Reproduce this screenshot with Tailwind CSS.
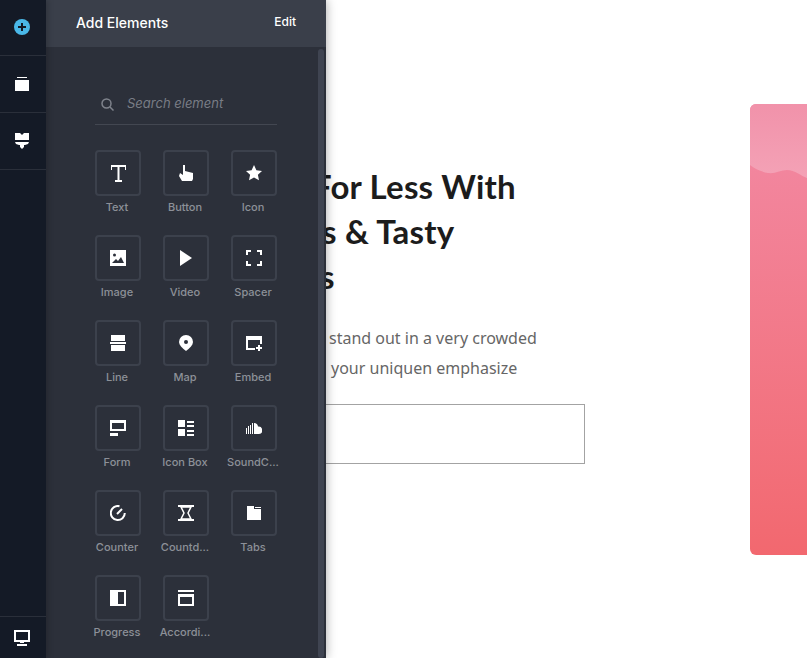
<!DOCTYPE html>
<html lang="en">
<head>
  <meta charset="UTF-8" />
  <title>Add Elements</title>
  <script src="https://cdn.jsdelivr.net/npm/@tailwindcss/browser@4"></script>
</head>
<body class="bg-white overflow-hidden">
  <div class="flex h-[658px] w-[807px] overflow-hidden font-['Inter',sans-serif]">

    <!-- icon rail -->
    <nav class="relative z-20 flex w-[46px] shrink-0 flex-col bg-[#141a26] text-white shadow-[2px_0_6px_rgba(0,0,0,0.2)]">
      <div class="flex h-[56px] items-center justify-center border-b border-[#2a2f3a] pb-[1px] pr-[2px]">
        <svg width="16" height="16" viewBox="0 0 16 16"><circle cx="8" cy="8" r="8" fill="#4ab8e8"/><path d="M8 4v8M4 8h8" stroke="#141a26" stroke-width="2"/></svg>
      </div>
      <div class="flex h-[57px] items-center justify-center border-b border-[#2a2f3a] pr-[2px]">
        <svg width="14" height="15" viewBox="0 0 14 15" fill="#fff"><rect x="2" y="0" width="10" height="1"/><rect x="0" y="3" width="14" height="11"/></svg>
      </div>
      <div class="flex h-[57px] items-center justify-center border-b border-[#2a2f3a] pr-[2px]">
        <svg width="14" height="16" viewBox="0 0 14 16" fill="#fff"><path d="M0 0h5l2 2 2-2h5v7H0zM0 9h14l-1 2-3 1-1 0v2l-2 2-2-2v-2l-1 0-3-1z"/></svg>
      </div>
      <div class="mt-auto flex h-[42px] items-center justify-center border-t border-[#2a2f3a] pr-[2px]">
        <svg width="16" height="16" viewBox="0 0 16 16" fill="none"><rect x="1" y="1" width="14" height="10" stroke="#fff" stroke-width="2"/><path d="M6 12h4v1H6zM3 14h10v2H3z" fill="#fff"/></svg>
      </div>
    </nav>

    <!-- add elements panel -->
    <aside class="relative z-10 flex w-[280px] shrink-0 flex-col bg-[#2c303a] shadow-[0_0_10px_rgba(0,0,0,0.35)]">
      <header class="flex h-[47px] shrink-0 items-center justify-between bg-[#3a3f4a] pb-[3px] pl-[30px] pr-[30px]">
        <h2 class="text-[14px] font-medium text-white">Add Elements</h2>
        <button class="text-[12px] font-medium text-white">Edit</button>
      </header>
      <div class="absolute bottom-0 right-[2px] top-[49px] w-[6px] rounded-[3px] bg-[#3f4451]"></div>

      <div class="px-[49px] pt-[44px]">
        <div class="flex h-[34px] items-start gap-[13px] border-b border-[#434751] pl-[6px] pt-[4px]">
          <svg class="mt-[3px]" width="13" height="13" viewBox="0 0 13 13" fill="none" stroke="#7f838c" stroke-width="1.5"><circle cx="5.5" cy="5.5" r="4.5"/><path d="M9 9l3.5 3.500"/></svg>
          <span class="text-[13px] italic leading-[17px] text-[#797d86]">Search element</span>
        </div>

        <div class="mt-[25px] grid grid-cols-[46px_46px_46px] gap-x-[22px] gap-y-[21px]">
          <!-- Text -->
          <div class="flex w-[46px] flex-col items-center">
            <div class="flex h-[46px] w-[46px] items-center justify-center rounded-[4px] border-2 border-[#3c414c]">
              <svg width="15" height="17" viewBox="0 0 15 17" fill="#fff"><path d="M0 0h15v5h-1V2H8.500v13H11v2H4v-2h2.500V2H1v3H0z"/></svg>
            </div>
            <span class="mt-[4px] whitespace-nowrap pr-[2px] text-[11px] font-medium leading-[14px] text-[#8d9098]">Text</span>
          </div>
          <!-- Button -->
          <div class="flex w-[46px] flex-col items-center">
            <div class="flex h-[46px] w-[46px] items-center justify-center rounded-[4px] border-2 border-[#3c414c]">
              <svg width="14" height="16" viewBox="0 0 14 16" fill="#fff"><path d="M4 0h2v6l8 2v6l-1 2H3l-3-5 1-3 3 2z"/></svg>
            </div>
            <span class="mt-[4px] whitespace-nowrap pr-[2px] text-[11px] font-medium leading-[14px] text-[#8d9098]">Button</span>
          </div>
          <!-- Icon -->
          <div class="flex w-[46px] flex-col items-center">
            <div class="flex h-[46px] w-[46px] items-center justify-center rounded-[4px] border-2 border-[#3c414c]">
              <svg width="16" height="16" viewBox="0 0 16 16" fill="#fff"><path d="M8 0l2.400 5.200 5.600.7-4.100 3.800 1.100 5.600L8 12.500l-5 2.800 1.100-5.600L0 5.900l5.600-.7z"/></svg>
            </div>
            <span class="mt-[4px] whitespace-nowrap pr-[2px] text-[11px] font-medium leading-[14px] text-[#8d9098]">Icon</span>
          </div>
          <!-- Image -->
          <div class="flex w-[46px] flex-col items-center">
            <div class="flex h-[46px] w-[46px] items-center justify-center rounded-[4px] border-2 border-[#3c414c]">
              <svg width="16" height="16" viewBox="0 0 16 16"><rect width="16" height="16" fill="#fff"/><circle cx="4.500" cy="5" r="1.500" fill="#2c303a"/><path d="M2 13l4-4 2 2 3-4 3 6z" fill="#2c303a"/></svg>
            </div>
            <span class="mt-[4px] whitespace-nowrap pr-[2px] text-[11px] font-medium leading-[14px] text-[#8d9098]">Image</span>
          </div>
          <!-- Video -->
          <div class="flex w-[46px] flex-col items-center">
            <div class="flex h-[46px] w-[46px] items-center justify-center rounded-[4px] border-2 border-[#3c414c]">
              <svg width="12" height="16" viewBox="0 0 12 16" fill="#fff"><path d="M0 0l12 8-12 8z"/></svg>
            </div>
            <span class="mt-[4px] whitespace-nowrap pr-[2px] text-[11px] font-medium leading-[14px] text-[#8d9098]">Video</span>
          </div>
          <!-- Spacer -->
          <div class="flex w-[46px] flex-col items-center">
            <div class="flex h-[46px] w-[46px] items-center justify-center rounded-[4px] border-2 border-[#3c414c]">
              <svg width="16" height="16" viewBox="0 0 16 16" fill="none" stroke="#fff" stroke-width="2"><path d="M1 5V1h4M11 1h4v4M15 11v4h-4M5 15H1v-4"/></svg>
            </div>
            <span class="mt-[4px] whitespace-nowrap pr-[2px] text-[11px] font-medium leading-[14px] text-[#8d9098]">Spacer</span>
          </div>
          <!-- Line -->
          <div class="flex w-[46px] flex-col items-center">
            <div class="flex h-[46px] w-[46px] items-center justify-center rounded-[4px] border-2 border-[#3c414c]">
              <svg width="16" height="16" viewBox="0 0 16 16" fill="#fff"><path d="M1 0h14v6H1zM0 7h16v2H0zM1 10h14v6H1z"/></svg>
            </div>
            <span class="mt-[4px] whitespace-nowrap pr-[2px] text-[11px] font-medium leading-[14px] text-[#8d9098]">Line</span>
          </div>
          <!-- Map -->
          <div class="flex w-[46px] flex-col items-center">
            <div class="flex h-[46px] w-[46px] items-center justify-center rounded-[4px] border-2 border-[#3c414c]">
              <svg width="14" height="16" viewBox="0 0 14 16"><path d="M7 0a7 7 0 0 1 7 7c0 3-3 6-7 9-4-3-7-6-7-9a7 7 0 0 1 7-7z" fill="#fff"/><circle cx="7" cy="7" r="2" fill="#2c303a"/></svg>
            </div>
            <span class="mt-[4px] whitespace-nowrap pr-[2px] text-[11px] font-medium leading-[14px] text-[#8d9098]">Map</span>
          </div>
          <!-- Embed -->
          <div class="flex w-[46px] flex-col items-center">
            <div class="flex h-[46px] w-[46px] items-center justify-center rounded-[4px] border-2 border-[#3c414c]">
              <svg width="16" height="15" viewBox="0 0 16 15" fill="none" stroke="#fff" stroke-width="2"><path d="M9 13H1V1h14v7" /><path d="M1 3h14" /><path d="M13 9v6M10 12h6" /></svg>
            </div>
            <span class="mt-[4px] whitespace-nowrap pr-[2px] text-[11px] font-medium leading-[14px] text-[#8d9098]">Embed</span>
          </div>
          <!-- Form -->
          <div class="flex w-[46px] flex-col items-center">
            <div class="flex h-[46px] w-[46px] items-center justify-center rounded-[4px] border-2 border-[#3c414c]">
              <svg width="16" height="16" viewBox="0 0 16 16" fill="#fff"><path d="M0 0h16v11H0zM2 3v6h12V3zM0 13h8v3H0z" fill-rule="evenodd"/></svg>
            </div>
            <span class="mt-[4px] whitespace-nowrap pr-[2px] text-[11px] font-medium leading-[14px] text-[#8d9098]">Form</span>
          </div>
          <!-- Icon Box -->
          <div class="flex w-[46px] flex-col items-center">
            <div class="flex h-[46px] w-[46px] items-center justify-center rounded-[4px] border-2 border-[#3c414c]">
              <svg width="16" height="16" viewBox="0 0 16 16" fill="#fff"><path d="M0 0h7v7H0zM0 9h7v7H0zM9 1h7v2H9zM9 5h7v2H9zM9 10h7v2H9zM9 14h7v2H9z"/></svg>
            </div>
            <span class="mt-[4px] whitespace-nowrap pr-[2px] text-[11px] font-medium leading-[14px] text-[#8d9098]">Icon Box</span>
          </div>
          <!-- SoundCloud -->
          <div class="flex w-[46px] flex-col items-center">
            <div class="flex h-[46px] w-[46px] items-center justify-center rounded-[4px] border-2 border-[#3c414c]">
              <svg width="16" height="12" viewBox="0 0 16 12" fill="#fff"><path d="M0 6h1v6H0zM2 4h1v8H2zM4 3h1v9H4zM6 1h1v11H6zM8 1a4 4 0 0 1 4 3.500A3.500 3.500 0 0 1 13 12H8z"/></svg>
            </div>
            <span class="mt-[4px] whitespace-nowrap pr-[2px] text-[11px] font-medium leading-[14px] text-[#8d9098]">SoundC...</span>
          </div>
          <!-- Counter -->
          <div class="flex w-[46px] flex-col items-center">
            <div class="flex h-[46px] w-[46px] items-center justify-center rounded-[4px] border-2 border-[#3c414c]">
              <svg width="16" height="16" viewBox="0 0 16 16" fill="none" stroke="#fff" stroke-width="2"><path d="M9.500 1.200a7 7 0 1 0 5.300 6.800"/><path d="M7 9l5-5" /></svg>
            </div>
            <span class="mt-[4px] whitespace-nowrap pr-[2px] text-[11px] font-medium leading-[14px] text-[#8d9098]">Counter</span>
          </div>
          <!-- Countdown -->
          <div class="flex w-[46px] flex-col items-center">
            <div class="flex h-[46px] w-[46px] items-center justify-center rounded-[4px] border-2 border-[#3c414c]">
              <svg width="16" height="16" viewBox="0 0 16 16"><path d="M0 0h16v2H0zM0 14h16v2H0z" fill="#fff"/><path d="M3 2h10l-3 6 3 6H3l3-6z" fill="none" stroke="#fff" stroke-width="1.500"/></svg>
            </div>
            <span class="mt-[4px] whitespace-nowrap pr-[2px] text-[11px] font-medium leading-[14px] text-[#8d9098]">Countd...</span>
          </div>
          <!-- Tabs -->
          <div class="flex w-[46px] flex-col items-center">
            <div class="flex h-[46px] w-[46px] items-center justify-center rounded-[4px] border-2 border-[#3c414c]">
              <svg width="14" height="14" viewBox="0 0 14 14" fill="#fff"><path d="M0 0h7v3h7v11H0zM8 1h6v1H8z"/></svg>
            </div>
            <span class="mt-[4px] whitespace-nowrap pr-[2px] text-[11px] font-medium leading-[14px] text-[#8d9098]">Tabs</span>
          </div>
          <!-- Progress -->
          <div class="flex w-[46px] flex-col items-center">
            <div class="flex h-[46px] w-[46px] items-center justify-center rounded-[4px] border-2 border-[#3c414c]">
              <svg width="16" height="16" viewBox="0 0 16 16"><rect width="16" height="16" fill="#fff"/><rect x="8" y="2" width="6" height="12" fill="#2c303a"/></svg>
            </div>
            <span class="mt-[4px] whitespace-nowrap pr-[2px] text-[11px] font-medium leading-[14px] text-[#8d9098]">Progress</span>
          </div>
          <!-- Accordion -->
          <div class="flex w-[46px] flex-col items-center">
            <div class="flex h-[46px] w-[46px] items-center justify-center rounded-[4px] border-2 border-[#3c414c]">
              <svg width="16" height="16" viewBox="0 0 16 16" fill="#fff"><path d="M0 0h16v2H0zM0 4h16v12H0zM2 7v7h12V7z" fill-rule="evenodd"/></svg>
            </div>
            <span class="mt-[4px] whitespace-nowrap pr-[2px] text-[11px] font-medium leading-[14px] text-[#8d9098]">Accordi...</span>
          </div>
        </div>
      </div>
    </aside>

    <!-- page being edited, partly behind the panel -->
    <main class="relative flex min-w-0 flex-1 justify-between overflow-hidden pt-[104px]">
      <section class="min-w-0">
        <div class="mt-[60px] font-['Lato',sans-serif] text-[33px] font-bold leading-[45px] tracking-[0.2px] text-[#1c1c1c]">
          <p class="-ml-[13px] whitespace-nowrap">For Less With</p>
          <p class="-ml-[4px] whitespace-nowrap">s &amp; Tasty</p>
          <p class="-ml-[6px] whitespace-nowrap">s</p>
        </div>
        <div class="mt-[24px] font-['Noto_Sans',sans-serif] text-[16px] leading-[30px] text-[#666]">
          <p class="ml-[3px] whitespace-nowrap">stand out in a very crowded</p>
          <p class="ml-[5px] whitespace-nowrap">your uniquen emphasize</p>
        </div>
        <div class="-ml-[10px] mt-[21px] h-[60px] w-[269px] border border-[#a3a3a3]"></div>
      </section>
      <div class="relative h-[451px] w-[57px] shrink-0 overflow-hidden rounded-l-[6px] bg-gradient-to-b from-[#f28aa5] to-[#f2686f]">
        <svg class="absolute left-0 top-0" width="57" height="90" viewBox="0 0 57 90">
          <defs><linearGradient id="topWash" x1="0" y1="0" x2="0" y2="1"><stop offset="0" stop-color="#f192aa"/><stop offset="1" stop-color="#f4a2b6"/></linearGradient></defs>
          <path d="M0 0h57v74c-6-2-12-8-20-8-6 0-12 4-19 3-6-1-13-4-18-8z" fill="url(#topWash)"/>
        </svg>
      </div>
    </main>
  </div>
</body>
</html>
